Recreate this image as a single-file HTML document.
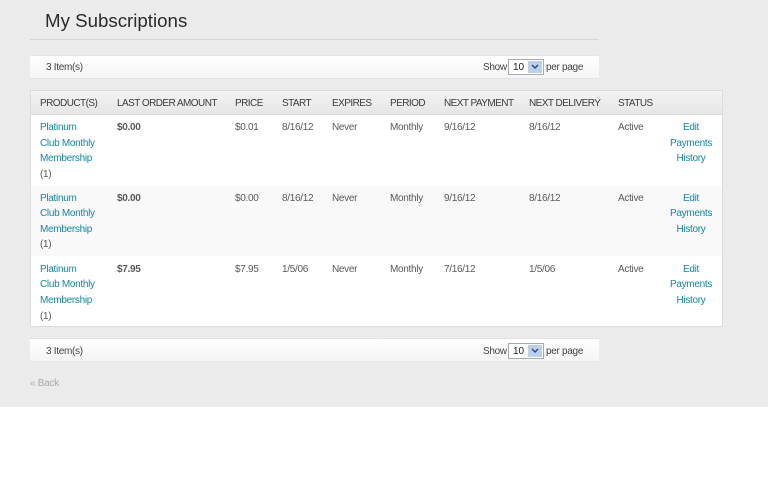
<!DOCTYPE html>
<html><head><meta charset="utf-8"><style>
html,body{margin:0;padding:0;width:768px;height:500px;overflow:hidden;background:#fff}
body{font-family:"Liberation Sans",Arial,sans-serif;position:relative}
#bg{position:absolute;left:0;top:0;width:768px;height:407px;background:#ebebeb}
.t{position:absolute;white-space:nowrap;font-size:10px;letter-spacing:-.3px;line-height:14px;color:#5a5a5a;margin-top:1px}
.l{color:#1288a8}.c{text-align:center;width:60px}.b{font-weight:bold}
.h{color:#3c3c3c;font-size:10px;letter-spacing:-.55px}
.m{color:#444}
h1{position:absolute;margin:0;left:45px;top:10px;font-size:18.7px;line-height:22px;font-weight:normal;color:#2b2b2b;white-space:nowrap}
.rule{position:absolute;left:30px;top:39px;width:569px;height:1px;background:#d6d6d6}
.bar{position:absolute;left:30px;width:569px;height:22px;background:linear-gradient(#fff,#f5f5f5);border:1px solid #e4e4e4;border-width:1px 0;box-sizing:content-box}
.sel{position:absolute;width:34px;height:14px;background:#fff;border:1px solid #a5acb5;font-size:10px;line-height:14px;color:#222;box-sizing:content-box}
.sel span{position:absolute;left:4px;top:1px}
.sel i{position:absolute;right:1px;top:1px;width:14px;height:12px;background:#bcd0ee}
.sel svg{position:absolute;left:3px;top:3px}
#tb{position:absolute;left:30px;top:90px;width:693px;height:237px;background:#fff;border:1px solid #dcdcdc;box-sizing:border-box}
#th{position:absolute;left:0;top:0;width:691px;height:24px;background:linear-gradient(#f3f3f3,#e6e6e6);border-bottom:1px solid #dedede;box-sizing:border-box}
#alt{position:absolute;left:0;top:95px;width:691px;height:70px;background:#f9f9f9}
</style></head><body>
<div id="bg"></div>
<h1>My Subscriptions</h1>
<div class="rule"></div>

<div class="bar" style="top:55px"></div>
<div class="t m" style="left:46px;top:60px">3 Item(s)</div>
<div class="t m" style="left:483px;top:60px">Show</div>
<div class="sel" style="left:508px;top:59px"><span>10</span><i><svg width="8" height="6" viewBox="0 0 8 6"><path d="M1 1l3 3 3-3" fill="none" stroke="#2a4a80" stroke-width="1.5"/></svg></i></div>
<div class="t m" style="left:546px;top:60px">per page</div>

<div id="tb"><div id="th"></div><div id="alt"></div></div>

<div class="t h" style="left:40px;top:96px">PRODUCT(S)</div>
<div class="t h" style="left:117px;top:96px">LAST ORDER AMOUNT</div>
<div class="t h" style="left:235px;top:96px">PRICE</div>
<div class="t h" style="left:282px;top:96px">START</div>
<div class="t h" style="left:332px;top:96px">EXPIRES</div>
<div class="t h" style="left:390px;top:96px">PERIOD</div>
<div class="t h" style="left:444px;top:96px">NEXT PAYMENT</div>
<div class="t h" style="left:529px;top:96px">NEXT DELIVERY</div>
<div class="t h" style="left:618px;top:96px">STATUS</div>

<div class="t l" style="left:40px;top:120px">Platinum</div>
<div class="t l" style="left:40px;top:136px">Club Monthly</div>
<div class="t l" style="left:40px;top:151px">Membership</div>
<div class="t" style="left:40px;top:167px">(1)</div>
<div class="t b" style="left:117px;top:120px">$0.00</div>
<div class="t" style="left:235px;top:120px">$0.01</div>
<div class="t" style="left:282px;top:120px">8/16/12</div>
<div class="t" style="left:332px;top:120px">Never</div>
<div class="t" style="left:390px;top:120px">Monthly</div>
<div class="t" style="left:444px;top:120px">9/16/12</div>
<div class="t" style="left:529px;top:120px">8/16/12</div>
<div class="t" style="left:618px;top:120px">Active</div>
<div class="t l c" style="left:661px;top:120px">Edit</div>
<div class="t l c" style="left:661px;top:136px">Payments</div>
<div class="t l c" style="left:661px;top:151px">History</div>

<div class="t l" style="left:40px;top:191px">Platinum</div>
<div class="t l" style="left:40px;top:206px">Club Monthly</div>
<div class="t l" style="left:40px;top:222px">Membership</div>
<div class="t" style="left:40px;top:237px">(1)</div>
<div class="t b" style="left:117px;top:191px">$0.00</div>
<div class="t" style="left:235px;top:191px">$0.00</div>
<div class="t" style="left:282px;top:191px">8/16/12</div>
<div class="t" style="left:332px;top:191px">Never</div>
<div class="t" style="left:390px;top:191px">Monthly</div>
<div class="t" style="left:444px;top:191px">9/16/12</div>
<div class="t" style="left:529px;top:191px">8/16/12</div>
<div class="t" style="left:618px;top:191px">Active</div>
<div class="t l c" style="left:661px;top:191px">Edit</div>
<div class="t l c" style="left:661px;top:206px">Payments</div>
<div class="t l c" style="left:661px;top:222px">History</div>

<div class="t l" style="left:40px;top:262px">Platinum</div>
<div class="t l" style="left:40px;top:277px">Club Monthly</div>
<div class="t l" style="left:40px;top:293px">Membership</div>
<div class="t" style="left:40px;top:309px">(1)</div>
<div class="t b" style="left:117px;top:262px">$7.95</div>
<div class="t" style="left:235px;top:262px">$7.95</div>
<div class="t" style="left:282px;top:262px">1/5/06</div>
<div class="t" style="left:332px;top:262px">Never</div>
<div class="t" style="left:390px;top:262px">Monthly</div>
<div class="t" style="left:444px;top:262px">7/16/12</div>
<div class="t" style="left:529px;top:262px">1/5/06</div>
<div class="t" style="left:618px;top:262px">Active</div>
<div class="t l c" style="left:661px;top:262px">Edit</div>
<div class="t l c" style="left:661px;top:277px">Payments</div>
<div class="t l c" style="left:661px;top:293px">History</div>

<div class="bar" style="top:338px"></div>
<div class="t m" style="left:46px;top:344px">3 Item(s)</div>
<div class="t m" style="left:483px;top:344px">Show</div>
<div class="sel" style="left:508px;top:343px"><span>10</span><i><svg width="8" height="6" viewBox="0 0 8 6"><path d="M1 1l3 3 3-3" fill="none" stroke="#2a4a80" stroke-width="1.5"/></svg></i></div>
<div class="t m" style="left:546px;top:344px">per page</div>

<div class="t" style="left:30px;top:376px;color:#aaa">« Back</div>
</body></html>
